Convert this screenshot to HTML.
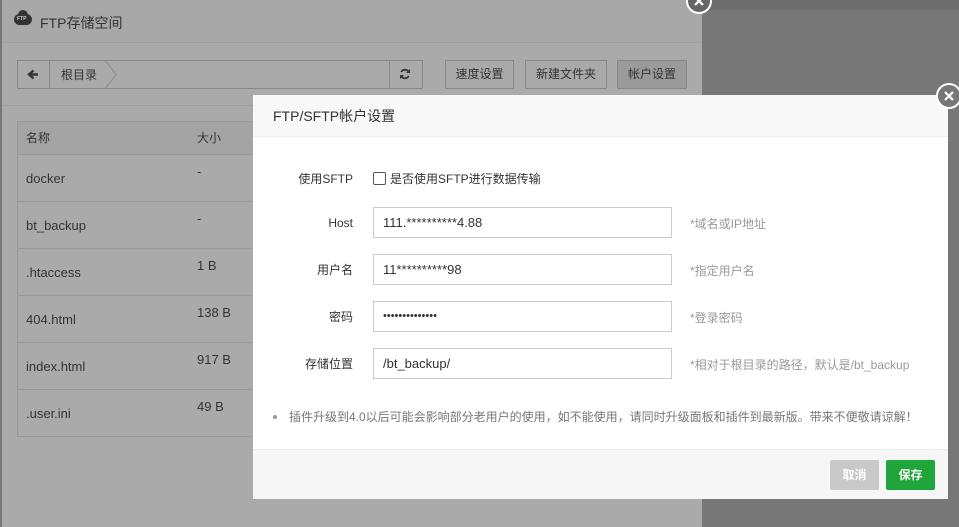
<!DOCTYPE html>
<html><head><meta charset="utf-8"><style>
*{box-sizing:border-box;margin:0;padding:0}
body{width:959px;height:527px;overflow:hidden;position:relative;background:#777;font-family:"Liberation Sans","Noto Sans CJK SC",sans-serif;font-size:12px;line-height:14px;color:#333}
.abs{position:absolute}
#bg{left:2px;top:0;width:700px;height:527px;background:#aaa}
#bghead{left:2px;top:0;width:700px;height:43px;border-bottom:1px solid #9f9f9f;background:#a8a8a8}
.t{color:#333}
.btn{position:absolute;top:60px;height:29px;border:1px solid #888;background:#a9a9a9;font-size:12px;line-height:27px;text-align:center;color:#333}
.row{position:absolute;left:17px;width:700px;height:47px;border-bottom:1px solid #999}
.row span{position:absolute;top:17px;font-size:13px;line-height:14px;color:#333}
#modal{left:253px;top:95px;width:695px;height:404px;background:#fff}
#mh{left:0;top:0;width:695px;height:42px;background:#f8f8f8;border-bottom:1px solid #eee;font-size:14px;line-height:42px;padding-left:20px;color:#333}
.lbl{position:absolute;right:595px;font-size:12px;line-height:14px;color:#333;text-align:right;white-space:nowrap}
.inp{position:absolute;left:120px;width:299px;height:31px;border:1px solid #ccc;font-size:13px;line-height:29px;padding-left:9px;color:#333}
.hint{position:absolute;left:437px;font-size:12px;line-height:14px;color:#999;white-space:nowrap}
#mf{left:0;top:354px;width:695px;height:50px;background:#f5f6f5;border-top:1px solid #eee}
.close{position:absolute;width:26px;height:26px;border-radius:50%;background:#666;border:2px solid #fff}
</style></head><body>
<div class="abs" id="bg"></div>
<div class="abs" id="bghead"></div>
<div class="abs" style="left:702px;top:0;width:257px;height:10px;background:#6e6e6e"></div>
<div class="abs" style="left:14px;top:14px;width:18px;height:11px;border-radius:6px;background:#333"></div>
<div class="abs" style="left:18px;top:10px;width:10px;height:10px;border-radius:50%;background:#333"></div>
<div class="abs" style="left:17px;top:16px;font-size:5px;line-height:6px;color:#ccc;font-weight:bold">FTP</div>
<div class="abs t" style="left:40px;top:15px;font-size:14px;line-height:16px">FTP存储空间</div>

<div class="abs" style="left:17px;top:60px;width:406px;height:29px;border:1px solid #888"></div>
<div class="abs" style="left:49px;top:60px;width:1px;height:29px;background:#888"></div>
<svg class="abs" style="left:27px;top:69px" width="12" height="11"><path d="M11 5.5H3M6.5 1.5L2 5.5L6.5 9.5" fill="none" stroke="#333" stroke-width="2.4"/></svg>
<div class="abs t" style="left:61px;top:68px">根目录</div>
<svg class="abs" style="left:104px;top:60px" width="14" height="29"><path d="M1 0 L12 14.5 L1 29" fill="none" stroke="#888"/></svg>
<div class="abs" style="left:389px;top:60px;width:1px;height:29px;background:#888"></div>
<svg class="abs" style="left:399px;top:68px" width="12" height="12" viewBox="0 0 12 12"><path d="M10 4.5A4.3 4.3 0 0 0 2.2 4M2 7.5A4.3 4.3 0 0 0 9.8 8" fill="none" stroke="#333" stroke-width="1.8"/><path d="M11 1V5H7Z M1 11V7H5Z" fill="#333"/></svg>
<div class="btn" style="left:445px;width:69px">速度设置</div>
<div class="btn" style="left:525px;width:82px">新建文件夹</div>
<div class="btn" style="left:617px;width:70px;background:#9a9a9a">帐户设置</div>
<div class="abs" style="left:2px;top:105px;width:700px;height:1px;background:#9f9f9f"></div>

<div class="abs" style="left:17px;top:121px;width:700px;height:34px;border:1px solid #999;border-right:none;background:#a4a4a4"></div>
<div class="abs t" style="left:26px;top:131px">名称</div>
<div class="abs t" style="left:197px;top:131px">大小</div>
<div class="abs" style="left:17px;top:155px;width:1px;height:282px;background:#999"></div>
<div class="row" style="top:155px"><span style="left:9px">docker</span><span style="left:180px;top:10px">-</span></div>
<div class="row" style="top:202px"><span style="left:9px">bt_backup</span><span style="left:180px;top:10px">-</span></div>
<div class="row" style="top:249px"><span style="left:9px">.htaccess</span><span style="left:180px;top:10px">1 B</span></div>
<div class="row" style="top:296px"><span style="left:9px">404.html</span><span style="left:180px;top:10px">138 B</span></div>
<div class="row" style="top:343px"><span style="left:9px">index.html</span><span style="left:180px;top:10px">917 B</span></div>
<div class="row" style="top:390px"><span style="left:9px">.user.ini</span><span style="left:180px;top:10px">49 B</span></div>

<div class="close" style="left:686px;top:-12px"><svg width="22" height="22" style="position:absolute;left:0;top:0"><path d="M7 7L15 15M15 7L7 15" stroke="#fff" stroke-width="2.2"/></svg></div>

<div class="abs" id="modal">
 <div class="abs" id="mh">FTP/SFTP帐户设置</div>
 <div class="lbl" style="top:77px">使用SFTP</div>
 <div class="abs" style="left:120px;top:77px;width:13px;height:13px;border:1px solid #555;border-radius:2px"></div>
 <div class="abs" style="left:137px;top:77px;font-size:12px;color:#333">是否使用SFTP进行数据传输</div>

 <div class="lbl" style="top:121px">Host</div>
 <div class="inp" style="top:112px">111.**********4.88</div>
 <div class="hint" style="top:122px">*域名或IP地址</div>
 <div class="lbl" style="top:168px">用户名</div>
 <div class="inp" style="top:159px">11**********98</div>
 <div class="hint" style="top:169px">*指定用户名</div>
 <div class="lbl" style="top:215px">密码</div>
 <div class="inp" style="top:206px;font-size:11px">••••••••••••••</div>
 <div class="hint" style="top:216px">*登录密码</div>
 <div class="lbl" style="top:262px">存储位置</div>
 <div class="inp" style="top:253px">/bt_backup/</div>
 <div class="hint" style="top:263px">*相对于根目录的路径，默认是/bt_backup</div>

 <div class="abs" style="left:20px;top:320px;width:4px;height:4px;border-radius:50%;background:#999"></div>
 <div class="abs" style="left:36px;top:315px;font-size:12px;color:#777;white-space:nowrap">插件升级到4.0以后可能会影响部分老用户的使用，如不能使用，请同时升级面板和插件到最新版。带来不便敬请谅解！</div>

 <div class="abs" id="mf">
  <div class="abs" style="left:577px;top:10px;width:49px;height:30px;background:#c9c9c9;border-radius:2px;color:#fff;font-weight:bold;font-size:12px;line-height:30px;text-align:center">取消</div>
  <div class="abs" style="left:633px;top:10px;width:49px;height:30px;background:#20a53a;border-radius:2px;color:#fff;font-weight:bold;font-size:12px;line-height:30px;text-align:center">保存</div>
 </div>
</div>
<div class="close" style="left:936px;top:83px;background:#777"><svg width="22" height="22" style="position:absolute;left:0;top:0"><path d="M7 7L15 15M15 7L7 15" stroke="#fff" stroke-width="2.2"/></svg></div>
</body></html>
